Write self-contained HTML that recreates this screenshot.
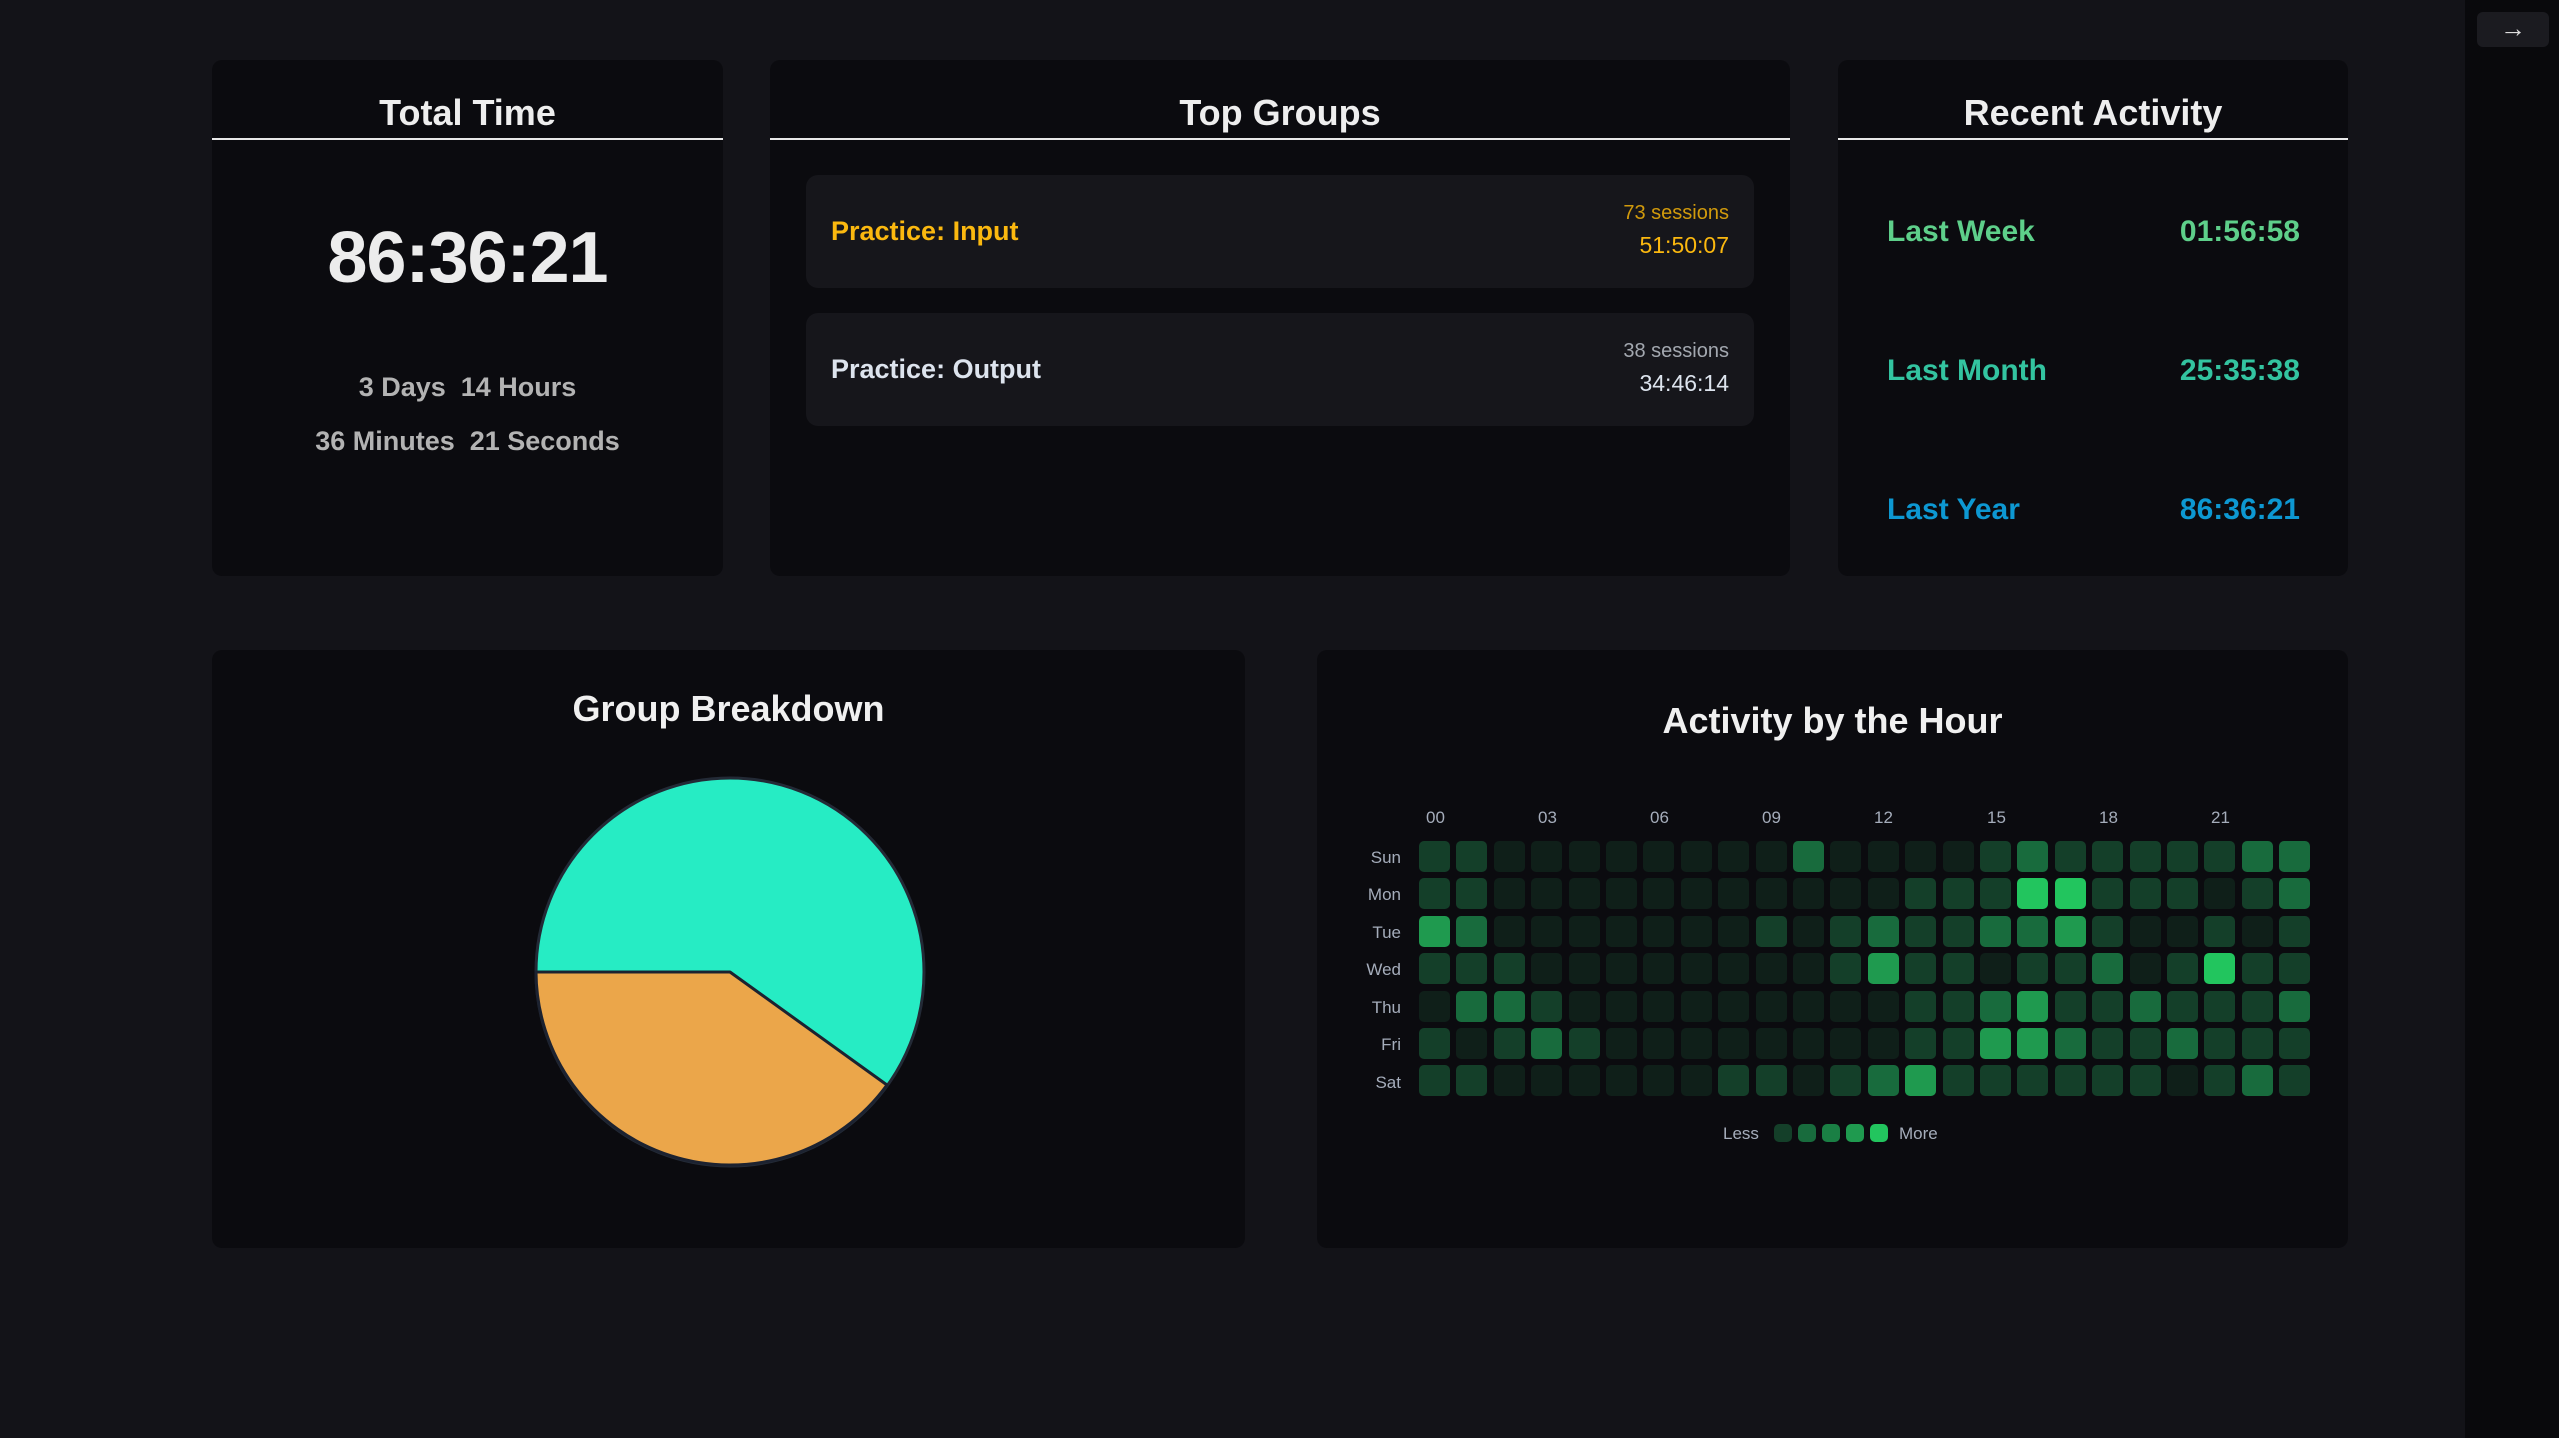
<!DOCTYPE html>
<html><head><meta charset="utf-8"><style>
*{box-sizing:border-box;margin:0;padding:0}
html,body{width:2559px;height:1438px;overflow:hidden;background:#131318;font-family:"Liberation Sans",sans-serif;color:#eee}
.side{position:absolute;left:2465px;top:0;width:94px;height:1438px;background:#09090c}
.btn{position:absolute;left:2477px;top:12px;width:72px;height:35px;background:#1b1b20;border-radius:6px;color:#ddd;font-size:26px;text-align:center;line-height:33px}
.card{position:absolute;background:#0b0b0f;border-radius:10px}
.hd{position:absolute;left:0;right:0;top:0;height:80px;border-bottom:2px solid #e8e8e8;text-align:center;font-weight:bold;font-size:36px;line-height:106px;white-space:nowrap}
.t{position:absolute;white-space:nowrap;font-weight:bold}
.grp{position:absolute;left:36px;right:36px;height:113px;background:#16161b;border-radius:12px}
.cell{position:absolute;width:31px;height:31px;border-radius:5px}
.lbl{position:absolute;font-size:17px;color:#a5adbb}
</style></head><body>
<div class="side"></div><div class="btn">→</div>

<div class="card" style="left:212px;top:60px;width:511px;height:516px">
 <div class="hd">Total Time</div>
 <div class="t" style="left:0;right:0;text-align:center;top:157px;font-size:72px;letter-spacing:-1px;color:#ececec">86:36:21</div>
 <div class="t" style="left:0;right:0;text-align:center;top:312px;font-size:27px;color:#b3b3b3">3 Days&nbsp; 14 Hours</div>
 <div class="t" style="left:0;right:0;text-align:center;top:366px;font-size:27px;color:#b3b3b3">36 Minutes&nbsp; 21 Seconds</div>
</div>

<div class="card" style="left:770px;top:60px;width:1020px;height:516px">
 <div class="hd">Top Groups</div>
 <div class="grp" style="top:115px">
  <div class="t" style="left:25px;top:41px;font-size:27px;color:#fbb80f">Practice: Input</div>
  <div class="t" style="right:25px;top:27px;font-size:20px;font-weight:normal;color:#d19a0c">73 sessions</div>
  <div class="t" style="right:25px;top:57px;font-size:23px;font-weight:normal;color:#fbb80f">51:50:07</div>
 </div>
 <div class="grp" style="top:253px">
  <div class="t" style="left:25px;top:41px;font-size:27px;color:#dde4ee">Practice: Output</div>
  <div class="t" style="right:25px;top:27px;font-size:20px;font-weight:normal;color:#a3a8b0">38 sessions</div>
  <div class="t" style="right:25px;top:57px;font-size:23px;font-weight:normal;color:#dde4ee">34:46:14</div>
 </div>
</div>

<div class="card" style="left:1838px;top:60px;width:510px;height:516px">
 <div class="hd">Recent Activity</div>
 <div class="t" style="left:49px;top:155px;font-size:30px;color:#5ecf8a">Last Week</div>
 <div class="t" style="right:48px;top:155px;font-size:30px;color:#5ecf8a">01:56:58</div>
 <div class="t" style="left:49px;top:294px;font-size:30px;color:#33c4a0">Last Month</div>
 <div class="t" style="right:48px;top:294px;font-size:30px;color:#33c4a0">25:35:38</div>
 <div class="t" style="left:49px;top:433px;font-size:30px;color:#0d98d2">Last Year</div>
 <div class="t" style="right:48px;top:433px;font-size:30px;color:#0d98d2">86:36:21</div>
</div>

<div class="card" style="left:212px;top:650px;width:1033px;height:598px">
 <div class="t" style="left:0;right:0;text-align:center;top:38px;font-size:36px;color:#f0f0f0">Group Breakdown</div>
</div>
<svg style="position:absolute;left:0;top:0" width="2559" height="1438">
 <circle cx="730" cy="972" r="194" fill="#26ecc4" stroke="#232a36" stroke-width="3"/>
 <path d="M730 972 L887 1085 A194 194 0 0 1 536 972 Z" fill="#eba64a" stroke="#1c2230" stroke-width="3" stroke-linejoin="round"/>
</svg>

<div class="card" style="left:1317px;top:650px;width:1031px;height:598px">
 <div class="t" style="left:0;right:0;text-align:center;top:50px;font-size:36px;color:#f0f0f0">Activity by the Hour</div>
</div>
<div id="hm" style="position:absolute;left:0;top:0">
 <div class="lbl" style="left:1426px;top:808px">00</div>
 <div class="lbl" style="left:1538px;top:808px">03</div>
 <div class="lbl" style="left:1650px;top:808px">06</div>
 <div class="lbl" style="left:1762px;top:808px">09</div>
 <div class="lbl" style="left:1874px;top:808px">12</div>
 <div class="lbl" style="left:1987px;top:808px">15</div>
 <div class="lbl" style="left:2099px;top:808px">18</div>
 <div class="lbl" style="left:2211px;top:808px">21</div>
 <div class="lbl" style="left:1341px;width:60px;text-align:right;top:848px">Sun</div>
 <div class="lbl" style="left:1341px;width:60px;text-align:right;top:885px">Mon</div>
 <div class="lbl" style="left:1341px;width:60px;text-align:right;top:923px">Tue</div>
 <div class="lbl" style="left:1341px;width:60px;text-align:right;top:960px">Wed</div>
 <div class="lbl" style="left:1341px;width:60px;text-align:right;top:998px">Thu</div>
 <div class="lbl" style="left:1341px;width:60px;text-align:right;top:1035px">Fri</div>
 <div class="lbl" style="left:1341px;width:60px;text-align:right;top:1073px">Sat</div>
 <div class="lbl" style="left:1723px;top:1124px">Less</div>
 <div class="lbl" style="left:1899px;top:1124px">More</div>
</div>
<script>
var d=[
"110000000020000121111122",
"110000000000011144111012",
"320000000101211223100101",
"111000000001311011201411",
"022100000000011231121112",
"101210000000011332112111",
"110000001101231111110121"];
var c=["#0f1f19","#143f29","#186b3d","#1f9a4f","#22c55e"];
var h=document.getElementById('hm'),s='';
for(var r=0;r<7;r++)for(var k=0;k<24;k++){
s+='<div class="cell" style="left:'+(1419+k*37.4).toFixed(1)+'px;top:'+(841+r*37.4).toFixed(1)+'px;background:'+c[+d[r][k]]+'"></div>';}
for(var i=0;i<5;i++){s+='<div class="cell" style="width:18px;height:18px;border-radius:5px;left:'+(1774+i*24)+'px;top:1124px;background:'+['#143f29','#186b3d','#1a7f44','#1f9a4f','#22c55e'][i]+'"></div>';}
h.insertAdjacentHTML('beforeend',s);
</script>
</body></html>
